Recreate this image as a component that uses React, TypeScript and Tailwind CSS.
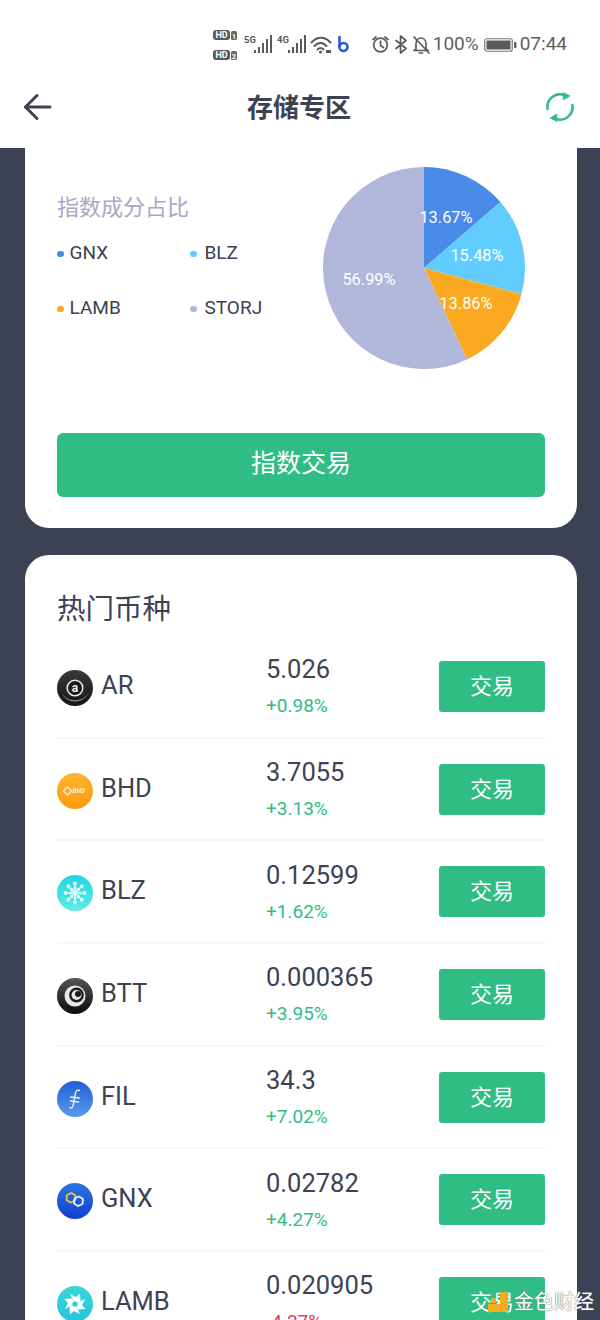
import React from "react";

const FONT = "font-['Roboto','Noto_Sans_CJK_SC',sans-serif]";

function StatusIcons() {
  const bars = (x: number) => (
    <g fill="#5a5a5a">
      <rect x={x} y={50} width="2" height="3" />
      <rect x={x + 4} y={47} width="2" height="6" />
      <rect x={x + 8} y={43} width="2" height="10" />
      <rect x={x + 12} y={39} width="2" height="14" />
      <rect x={x + 16} y={35} width="2" height="18" />
    </g>
  );
  const hd = (y: number, n: string) => (
    <g>
      <rect x="213" y={y} width="17" height="10" rx="3" fill="#5a5a5a" />
      <text x="221.5" y={y + 8} textAnchor="middle" fontSize="9" fontWeight="700" fill="#fff" fontFamily="Roboto">HD</text>
      <rect x="231" y={y + 1} width="6" height="9" rx="1.5" fill="#6a6a6a" />
      <text x="234" y={y + 8.5} textAnchor="middle" fontSize="7" fontWeight="700" fill="#fff" fontFamily="Roboto">{n}</text>
    </g>
  );
  return (
    <svg width="217" height="40" viewBox="213 25 217 40" className="shrink-0">
      {hd(30, "1")}
      {hd(50, "2")}
      <text x="244" y="43" fontSize="9.5" fontWeight="700" fill="#5a5a5a" fontFamily="Roboto">5G</text>
      {bars(254)}
      <text x="277" y="43" fontSize="9.5" fontWeight="700" fill="#5a5a5a" fontFamily="Roboto">4G</text>
      {bars(288)}
      <g fill="none" stroke="#5a5a5a" strokeWidth="2" strokeLinecap="round">
        <path d="M311.5 42.5 C317 36 325 36 330.5 42.5" />
        <path d="M314.5 46 C318 42 323 42 326.5 46" />
        <path d="M317.5 49.5 C319.5 47.5 321.5 47.5 323.5 49.5" />
      </g>
      <circle cx="320.5" cy="52" r="1.5" fill="#5a5a5a" />
      <rect x="326" y="50" width="5" height="3" fill="#5a5a5a" />
      <path d="M339.5 37 V47" stroke="#2f55d4" strokeWidth="2.6" strokeLinecap="round" />
      <circle cx="343.5" cy="47" r="4" fill="none" stroke="#2f55d4" strokeWidth="2.6" />
      <g fill="none" stroke="#5a5a5a" strokeWidth="1.7" strokeLinecap="round">
        <circle cx="380.5" cy="45" r="6.8" />
        <path d="M380.5 41 V45.5 L383.5 47.5" />
        <path d="M373 39.5 L376 37" />
        <path d="M388 39.5 L385 37" />
        <path d="M396 40.5 L406 48.5 L400.5 53 V36 L406 40.5 L396 48.5" strokeLinejoin="round" />
        <path d="M416 49 V44 C416 40 418.5 38 421 38 C423.5 38 426 40 426 44 V49 L428 50.5 H414 L416 49 Z" strokeLinejoin="round" />
        <path d="M419.5 53 H422.5" />
        <path d="M414 37 L429 53" />
      </g>
    </svg>
  );
}

function Battery() {
  return (
    <svg width="33" height="14" viewBox="0 0 33 14" className="block shrink-0">
      <rect x="0.75" y="0.75" width="27.5" height="12.5" rx="2" fill="none" stroke="#777" strokeWidth="1.2" />
      <rect x="2.5" y="2.5" width="24" height="9" rx="0.5" fill="#5a5a5a" />
      <rect x="30" y="4" width="2.4" height="6" rx="0.8" fill="#5a5a5a" />
    </svg>
  );
}

function Refresh() {
  return (
    <svg width="30" height="30" viewBox="0 0 30 30" fill="none" stroke="#30bd85" strokeWidth="2.6" strokeLinecap="round">
      <path d="M2.6 17 A12.6 12.6 0 0 1 19 3" />
      <path d="M27.4 13 A12.6 12.6 0 0 1 11 27" />
      <path d="M18.5 0.8 L24.8 4 L18.5 7.6 Z" fill="#30bd85" strokeWidth="1" strokeLinejoin="round" />
      <path d="M11.5 29.2 L5.2 26 L11.5 22.4 Z" fill="#30bd85" strokeWidth="1" strokeLinejoin="round" />
    </svg>
  );
}

function Pie() {
  const data = [
    { v: 13.67, c: "#4a8ae8" },
    { v: 15.48, c: "#61cdff" },
    { v: 13.86, c: "#fca922" },
    { v: 56.99, c: "#b1b7db" },
  ];
  let a = 0;
  const R = 101;
  const pt = (t: number) => {
    const r = (t / 100) * Math.PI * 2;
    return `${102 + R * Math.sin(r)} ${102 - R * Math.cos(r)}`;
  };
  return (
    <svg width="204" height="204" viewBox="0 0 204 204" className="shrink-0">
      {data.map((d) => {
        const s = a;
        a += d.v;
        return <path key={d.c} d={`M102 102 L${pt(s)} A${R} ${R} 0 ${d.v > 50 ? 1 : 0} 1 ${pt(a)} Z`} fill={d.c} />;
      })}
      <g fill="#fff" fontSize="16.4" fontFamily="Roboto" textAnchor="middle">
        <text x="124" y="57">13.67%</text>
        <text x="155" y="95">15.48%</text>
        <text x="144" y="143">13.86%</text>
        <text x="47" y="119">56.99%</text>
      </g>
    </svg>
  );
}

function Coin({ name }: { name: string }) {
  const defs: Record<string, [string, string]> = {
    AR: ["#3a3a3a", "#151515"],
    BHD: ["#ffb52e", "#fb9a10"],
    BLZ: ["#22d3e0", "#5ceee6"],
    BTT: ["#555", "#0c0c0c"],
    FIL: ["#1f5fd8", "#5a9aea"],
    GNX: ["#2f74e0", "#0f3fd0"],
    LAMB: ["#3bd5d8", "#25c4dc"],
  };
  const [a, b] = defs[name];
  const id = `g-${name}`;
  return (
    <svg width="36" height="36" viewBox="0 0 36 36" className="block shrink-0">
      <defs>
        <linearGradient id={id} x1="0" y1="0" x2="0" y2="1">
          <stop offset="0" stopColor={a} />
          <stop offset="1" stopColor={b} />
        </linearGradient>
      </defs>
      <circle cx="18" cy="18" r="18" fill={`url(#${id})`} />
      {name === "AR" && (
        <g>
          <path d="M4 22 A15 15 0 0 0 32 22 A15 13 0 0 1 4 22 Z" fill="#8a8a8a" />
          <circle cx="18" cy="18" r="7.8" fill="#1a1a1a" stroke="#f2f2f2" strokeWidth="1.5" />
          <text x="18" y="21.8" textAnchor="middle" fontSize="12" fontWeight="700" fill="#f5f5f5" fontFamily="Roboto">a</text>
        </g>
      )}
      {name === "BHD" && (
        <g>
          <path d="M10.5 14 L14.5 18 L10.5 22 L6.5 18 Z" fill="none" stroke="#ffeec8" strokeWidth="1.4" />
          <text x="15.5" y="20.2" fontSize="6.5" fontWeight="700" fontStyle="italic" fill="#ffeec8" fontFamily="Roboto">BHD</text>
        </g>
      )}
      {name === "BLZ" && (
        <g stroke="#e8fffd" strokeWidth="1.2" fill="#e8fffd">
          {[0, 45, 90, 135, 180, 225, 270, 315].map((r) => (
            <g key={r} transform={`rotate(${r} 18 18)`}>
              <path d="M18 18 V8.5" />
              <circle cx="18" cy="8.5" r="1.9" stroke="none" />
              <circle cx="18" cy="13.3" r="1.5" stroke="none" />
            </g>
          ))}
          <circle cx="18" cy="18" r="2.4" stroke="none" />
        </g>
      )}
      {name === "BTT" && (
        <g>
          <circle cx="18" cy="18" r="10.5" fill="#e8e8e8" />
          <circle cx="19.5" cy="17" r="7.4" fill="#1c1c1c" />
          <circle cx="19.5" cy="17" r="5" fill="#e8e8e8" />
          <circle cx="21" cy="16" r="3" fill="#1c1c1c" />
        </g>
      )}
      {name === "FIL" && (
        <g fill="none" stroke="#eaf2ff" strokeWidth="1.4" strokeLinecap="round">
          <path d="M22.5 9.5 C20 8.5 18.8 10 18.3 13 L16.2 24 C15.7 27 14.2 27.5 12.5 26.5" />
          <path d="M13.5 16 L22.5 17" />
          <path d="M13.5 20 L21.5 21" />
        </g>
      )}
      {name === "GNX" && (
        <g fill="none" strokeWidth="1.8">
          <path d="M10 12 L14.5 10 L18.5 12.5 L18 17.5 L13.5 19.5 L9.5 17 Z" stroke="#e6c84a" />
          <path d="M17.5 15.5 L22 13.5 L26 16 L25.5 21 L21 23 L17 20.5 Z" stroke="#e8f0ff" />
        </g>
      )}
      {name === "LAMB" && (
        <g>
          {[0, 90, 180, 270].map((r) => (
            <path key={r} transform={`rotate(${r} 18 18)`} d="M18 18 L13 8 L19 11 L23 7.5 L23.5 15 Z" fill="#fff" />
          ))}
          <circle cx="18" cy="18" r="2.6" fill="#2ec9da" />
        </g>
      )}
    </svg>
  );
}

const rows = [
  { n: "AR", p: "5.026", c: "+0.98%" },
  { n: "BHD", p: "3.7055", c: "+3.13%" },
  { n: "BLZ", p: "0.12599", c: "+1.62%" },
  { n: "BTT", p: "0.000365", c: "+3.95%" },
  { n: "FIL", p: "34.3", c: "+7.02%" },
  { n: "GNX", p: "0.02782", c: "+4.27%" },
  { n: "LAMB", p: "0.020905", c: "-4.27%" },
];

const legend = [
  { n: "GNX", c: "bg-[#4a8ae8]" },
  { n: "BLZ", c: "bg-[#61cdff]" },
  { n: "LAMB", c: "bg-[#fca922]" },
  { n: "STORJ", c: "bg-[#b1b7db]" },
];

export default function App() {
  return (
    <div className={`${FONT} relative h-[1320px] w-[600px] overflow-hidden bg-[#3c4254] text-[#3c4254]`}>
      <header className="bg-white">
        <div className="flex h-[80px] items-center justify-end gap-[4px] pr-[33px] pt-[9px] text-[19px] text-[#5f5f5f]">
          <span className="mr-[-1px]"><StatusIcons /></span>
          <span>100%</span>
          <span className="ml-[1px]"><Battery /></span>
          <span className="ml-[-1px]">07:44</span>
        </div>
        <div className="flex h-[68px] items-start justify-between pl-[23px] pr-[25px] pt-[12px]">
          <svg width="30" height="30" viewBox="0 0 30 30" fill="none" stroke="#3c4254" strokeWidth="3" strokeLinecap="round" strokeLinejoin="round">
            <path d="M2.5 15 H27" />
            <path d="M14 3.5 L2.5 15 L14 26.5" />
          </svg>
          <h1 className="text-[26px] font-bold leading-[32px]">存储专区</h1>
          <Refresh />
        </div>
      </header>

      <section className="ml-[25px] mr-[23px] rounded-b-[24px] bg-white pb-[31px] pl-[32px] pr-[32px] pt-[18px]">
        <div className="flex">
          <div className="w-[265px] pt-[28px]">
            <h2 className="text-[22px] leading-[28px] text-[#a6a8c6]">指数成分占比</h2>
            <div className="mt-[4px] grid auto-rows-[55px] grid-cols-[133px_1fr] items-center text-[19px]">
              {legend.map((l) => (
                <div key={l.n} className="flex items-center gap-[6px]">
                  <span className={`h-[6px] w-[6.5px] rounded-full ${l.c}`} />
                  <span className={l.n === "BLZ" || l.n === "STORJ" ? "ml-[2px]" : ""}>{l.n}</span>
                </div>
              ))}
            </div>
          </div>
          <Pie />
        </div>
        <button className="mt-[63px] flex h-[64px] w-full items-center justify-center rounded-[6px] bg-[#30bd85] pb-[3px] text-[25px] text-white">
          指数交易
        </button>
      </section>

      <section className="ml-[25px] mr-[23px] mt-[27px] rounded-[24px] bg-white px-[32px] pt-[37px]">
        <h2 className="text-[28.5px] leading-[36px]">热门币种</h2>
        <div className="mt-[8px]">
          {rows.map((r) => (
            <div key={r.n} className="flex h-[102.7px] items-center border-b-2 border-[#f6f6f8]">
              <div className="flex w-[209px] items-center gap-[8px]">
                <span className="pt-[3px]"><Coin name={r.n} /></span>
                <span className="pb-[3px] text-[25.5px] leading-[30px]">{r.n}</span>
              </div>
              <div className="flex-1">
                <div className="text-[25.5px] leading-[30px]">{r.p}</div>
                <div className={`mt-[10px] text-[19px] leading-[24px] ${r.c.startsWith("-") ? "text-[#e0405a]" : "text-[#30bd85]"}`}>{r.c}</div>
              </div>
              <button className="flex h-[51px] w-[106px] items-center justify-center rounded-[3px] bg-[#30bd85] text-[22px] text-white">
                交易
              </button>
            </div>
          ))}
        </div>
      </section>

      <div className="absolute bottom-[6px] right-[6px] flex items-center gap-[6px]">
        <svg width="20" height="20" viewBox="0 0 20 20">
          <path d="M12 0 H20 V20 H0 V12 H12 Z" fill="#f5ab1e" />
          <rect x="3" y="6" width="5" height="5" fill="#f5ab1e" />
        </svg>
        <span className="text-[20px] leading-[24px] text-white [text-shadow:0_0_1px_#777,0_0_1px_#777]">金色财经</span>
      </div>
    </div>
  );
}
